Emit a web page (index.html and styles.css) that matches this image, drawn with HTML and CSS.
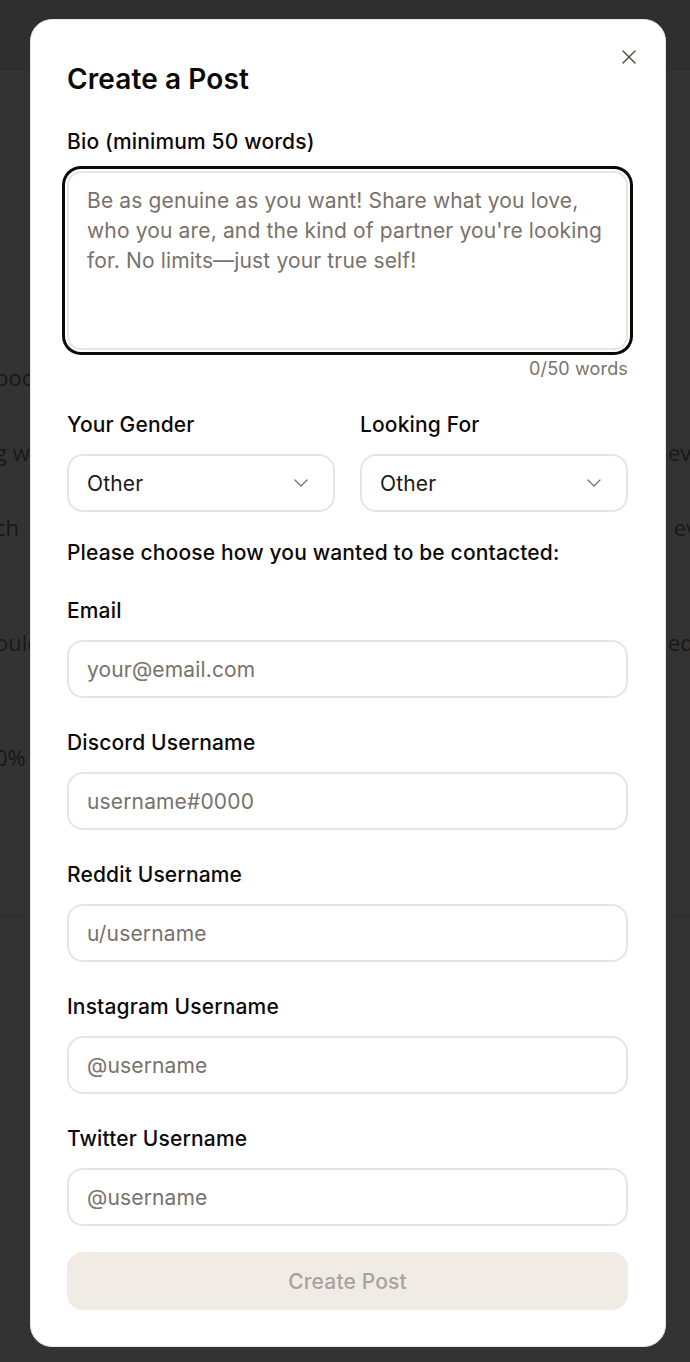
FILE: index.html
```html
<!DOCTYPE html>
<html lang="en">

<head>
  <meta charset="UTF-8">
  <title>Create a Post</title>
  <link rel="stylesheet" href="styles.css">
</head>

<body>

  <div class="pagina">
    <header class="barra"></header>
    <main class="feed">
      <div class="linea linea-1"><span class="izq">boo</span><span class="der"></span></div>
      <div class="linea"><span class="izq">g w</span><span class="der">every</span></div>
      <div class="linea"><span class="izq">ch</span><span class="der">&nbsp;every</span></div>
      <div class="linea linea-4"><span class="izq">oulc</span><span class="der">ed</span></div>
      <div class="linea linea-5"><span class="izq">0%</span><span class="der"></span></div>
    </main>
    <section class="pie"></section>
  </div>

  <div class="overlay">
    <div class="modal">
      <button class="cerrar" type="button" aria-label="Close">
        <svg width="16" height="16" viewBox="0 0 16 16" fill="none" stroke="currentColor" stroke-width="1.5" stroke-linecap="round">
          <path d="M2 2L14 14M14 2L2 14" />
        </svg>
      </button>

      <h2>Create a Post</h2>

      <form class="formulario" id="formPost">
        <div class="campo">
          <label for="bio">Bio (minimum 50 words)</label>
          <textarea id="bio" class="enfocado" placeholder="Be as genuine as you want! Share what you love, who you are, and the kind of partner you're looking for. No limits—just your true self!"></textarea>
          <div class="contador">0/50 words</div>
        </div>

        <div class="fila-doble">
          <div class="campo">
            <label for="genero">Your Gender</label>
            <select id="genero">
              <option>Male</option>
              <option>Female</option>
              <option selected>Other</option>
            </select>
          </div>
          <div class="campo">
            <label for="busca">Looking For</label>
            <select id="busca">
              <option>Male</option>
              <option>Female</option>
              <option selected>Other</option>
            </select>
          </div>
        </div>

        <p class="nota">Please choose how you wanted to be contacted:</p>

        <div class="campo">
          <label for="email">Email</label>
          <input type="text" id="email" placeholder="your@email.com">
        </div>

        <div class="campo">
          <label for="discord">Discord Username</label>
          <input type="text" id="discord" placeholder="username#0000">
        </div>

        <div class="campo">
          <label for="reddit">Reddit Username</label>
          <input type="text" id="reddit" placeholder="u/username">
        </div>

        <div class="campo">
          <label for="instagram">Instagram Username</label>
          <input type="text" id="instagram" placeholder="@username">
        </div>

        <div class="campo">
          <label for="twitter">Twitter Username</label>
          <input type="text" id="twitter" placeholder="@username">
        </div>

        <button type="submit" class="crear" disabled>Create Post</button>
      </form>
    </div>
  </div>

</body>

</html>
```

FILE: styles.css
```css
* {
  box-sizing: border-box;
}

body {
  margin: 0;
  font-family: Inter, "Noto Sans", sans-serif;
  background: #ffffff;
  color: #0c0a09;
}

/* pagina de fondo (queda detras del overlay) */
.pagina {
  height: 1362px;
  overflow: hidden;
}

.barra {
  height: 70px;
  background: #e8e8e8;
  border-bottom: 1px solid #dcdcdc;
}

.feed {
  height: 845px;
  padding-top: 292px;
  font-family: "Open Sans", sans-serif;
  font-size: 22px;
  color: #7a7a7a;
}

.linea {
  display: flex;
  justify-content: space-between;
  height: 75px;
  line-height: 30px;
  white-space: nowrap;
}

.linea-4 {
  margin-top: 40px;
}

.linea-5 {
  margin-top: 40px;
}

.izq {
  margin-left: -5px;
}

.der {
  width: 22px;
  overflow: hidden;
}

.pie {
  border-top: 1px solid #e0e0e0;
  height: 100%;
}

/* overlay + modal */
.overlay {
  position: fixed;
  inset: 0;
  background: rgba(0, 0, 0, 0.8);
  display: flex;
  justify-content: center;
  align-items: flex-start;
  padding-top: 19px;
}

.modal {
  position: relative;
  width: 636px;
  margin-left: 6px;
  background: white;
  border: 1px solid #e7e5e4;
  border-radius: 22px;
  padding: 41px 37px 36px 36px;
}

.cerrar {
  position: absolute;
  top: 29px;
  right: 28px;
  width: 16px;
  height: 16px;
  padding: 0;
  border: none;
  background: none;
  color: #57534e;
  cursor: pointer;
}

.cerrar svg {
  display: block;
}

.modal h2 {
  margin: 0 0 30px;
  font-size: 28px;
  line-height: 36px;
  font-weight: 600;
  letter-spacing: 0.1px;
}

.formulario {
  display: flex;
  flex-direction: column;
  letter-spacing: 0.15px;
}

.campo {
  display: flex;
  flex-direction: column;
  margin-bottom: 30px;
}

.campo label,
.nota {
  font-size: 21px;
  line-height: 30px;
  font-weight: 500;
  margin: 0 0 14px;
}

.formulario textarea,
.formulario input,
.formulario select {
  width: 100%;
  font-family: inherit;
  font-size: 21px;
  letter-spacing: 0.15px;
  color: #1c1917;
  background: white;
  border: 2px solid #e7e5e4;
  border-radius: 16px;
  outline: none;
}

.formulario input,
.formulario select {
  height: 58px;
  padding: 1px 18px 0;
}

.formulario textarea {
  height: 179px;
  padding: 13px 18px;
  line-height: 30px;
  resize: none;
  border-radius: 14px;
}

.formulario textarea.enfocado {
  box-shadow: 0 0 0 2px white, 0 0 0 5px #0c0a09;
}

.formulario ::placeholder {
  color: #78716c;
  opacity: 1;
}

.formulario select {
  appearance: none;
  background-image: url("data:image/svg+xml,%3Csvg xmlns='http://www.w3.org/2000/svg' width='14' height='8' viewBox='0 0 14 8' fill='none' stroke='%2378716c' stroke-width='1.3' stroke-linecap='round' stroke-linejoin='round'%3E%3Cpath d='M1 1l6 6 6-6'/%3E%3C/svg%3E");
  background-repeat: no-repeat;
  background-position: right 25px center;
}

.contador {
  margin-top: 8px;
  text-align: right;
  font-size: 18px;
  line-height: 22px;
  color: #78716c;
}

.fila-doble {
  display: grid;
  grid-template-columns: 1fr 1fr;
  gap: 25px;
}

.fila-doble .campo {
  margin-bottom: 26px;
}

.nota {
  margin-bottom: 28px;
}

.crear {
  margin-top: -4px;
  height: 58px;
  width: 100%;
  border: none;
  border-radius: 16px;
  background: #f0ebe5;
  color: #a8a29e;
  font-family: inherit;
  font-size: 21px;
  font-weight: 500;
  letter-spacing: 0.15px;
}
```
